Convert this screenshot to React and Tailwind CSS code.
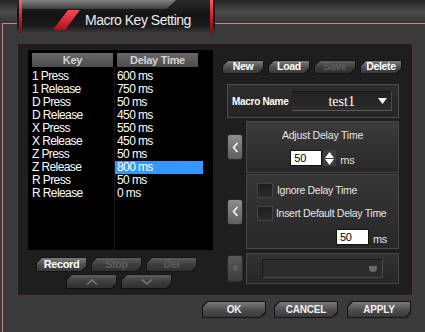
import React from 'react';

const cut = '[clip-path:polygon(5px_0,100%_0,100%_calc(100%-5px),calc(100%-5px)_100%,0_100%,0_5px)]';

const rows = [
  ['1 Press', '600 ms'],
  ['1 Release', '750 ms'],
  ['D Press', '50 ms'],
  ['D Release', '450 ms'],
  ['X Press', '550 ms'],
  ['X Release', '450 ms'],
  ['Z Press', '50 ms'],
  ['Z Release', '800 ms'],
  ['R Press', '50 ms'],
  ['R Release', '0 ms'],
];

function Chamfer({ className, dark, children }) {
  return (
    <div className={`${cut} bg-[#141414] p-px ${className}`}>
      <div
        className={`${cut} flex h-full w-full items-center justify-center ${
          dark
            ? 'bg-[linear-gradient(#5c5c5c,#3e3e3e_50%,#303030)]'
            : 'bg-[linear-gradient(#7c7c7c,#505050_50%,#383838)]'
        }`}
      >
        {children}
      </div>
    </div>
  );
}

function SideButton({ dim }) {
  return (
    <div
      className={`flex h-[26px] w-[16px] items-center justify-center rounded-[3px] border border-[#2a2a2a] ${
        dim ? 'bg-[linear-gradient(#5a5a5a,#3c3c3c)]' : 'bg-[linear-gradient(#8e8e8e,#5e5e5e)]'
      }`}
    >
      {dim ? (
        <span className="text-[9px] text-[#6a6a6a]">✲</span>
      ) : (
        <svg width="7" height="11" viewBox="0 0 7 11">
          <path d="M5.5 1 L1.5 5.5 L5.5 10" stroke="#ffffff" strokeWidth="1.6" fill="none" />
        </svg>
      )}
    </div>
  );
}

function Checkbox() {
  return <div className="h-[15px] w-[16px] border border-[#454545] bg-[linear-gradient(#1e1e1e,#2c2c2c)]" />;
}

export default function App() {
  return (
    <div className="relative flex h-[332px] w-[425px] flex-col overflow-hidden bg-[#3a3a3a] font-['Liberation_Sans',Arial,sans-serif] text-white">
      {/* top stripes */}
      <div className="h-[23px] shrink-0 bg-[linear-gradient(#242424,#333333_20%,#4c4c4c_50%,#3e3e3e_80%,#343434)]" />

      {/* title tab */}
      <div className="absolute left-[17px] top-0 flex h-[33px] w-[198px] items-center overflow-hidden bg-[linear-gradient(#2a2a2a,#131313_45%,#1c1c1c_80%,#3a3a3a)]">
        <div className="absolute left-[3px] top-0 h-[9px] w-[156px] bg-[linear-gradient(#a8a8a8,#4a4a4a)] [clip-path:polygon(0_0,100%_0,94%_100%,0_100%)] opacity-70" />
        <div className="absolute left-[2px] top-0 h-full w-[3px] bg-[linear-gradient(#ff5868,#c01828_60%,#701018)]" />
        <div className="absolute right-[2px] top-0 h-full w-[3px] bg-[linear-gradient(#ff5868,#c01828_60%,#701018)]" />
        <svg className="ml-[35px] shrink-0" width="30" height="33" viewBox="0 0 30 33">
          <defs>
            <linearGradient id="slash" x1="0" y1="0" x2="0" y2="1">
              <stop offset="0" stopColor="#ff4a55" />
              <stop offset="1" stopColor="#b0101c" />
            </linearGradient>
          </defs>
          <polygon points="1,30 13,30 28,10 16,10" fill="url(#slash)" />
        </svg>
        <span className="ml-[3px] mt-[8px] text-[14px] tracking-[-0.5px] text-[#ececec]">Macro Key Setting</span>
      </div>

      {/* frame */}
      <div className="ml-[2px] flex flex-1 flex-col border-l border-t border-[#c98a8e] pl-[14px] pt-[19px]">
        {/* main panel */}
        <div className="flex h-[253px] w-[396px] border border-[#553539] bg-[#1e1e1e]">
          {/* left list side */}
          <div className="flex w-[195px] flex-col pl-[10px] pt-[6px]">
            <div className="relative flex h-[200px] w-[185px] flex-col bg-black pl-[4px] pt-[3px] text-[12px] tracking-[-0.6px]">
              <div className="absolute bottom-0 left-[86px] top-[17px] w-px bg-[#1c1c1c]" />
              <div className="flex gap-[4px] text-[11px] tracking-[-0.3px]">
                <div className="flex h-[14px] w-[81px] items-center justify-center bg-[linear-gradient(#686868,#4c4c4c)] font-bold text-[#d4d4d4]">Key</div>
                <div className="flex h-[14px] w-[81px] items-center justify-center bg-[linear-gradient(#686868,#4c4c4c)] font-bold text-[#d4d4d4]">Delay Time</div>
              </div>
              <div className="mt-[3px] flex flex-col">
                {rows.map(([k, d], i) => (
                  <div key={i} className="flex h-[13px] items-center leading-[13px]">
                    <span className="w-[83px]">{k}</span>
                    <span className={`h-[13px] w-[88px] pl-[2px] ${i === 7 ? 'bg-[#3399ff]' : ''}`}>{d}</span>
                  </div>
                ))}
              </div>
            </div>
            <div className="mt-[7px] flex gap-[4px] pl-[8px] text-[11px] font-bold tracking-[-0.4px]">
              <Chamfer className="h-[15px] w-[51px]">Record</Chamfer>
              <Chamfer className="h-[15px] w-[51px]" dark>
                <span className="text-[#5c5c5c]">Stop</span>
              </Chamfer>
              <Chamfer className="h-[15px] w-[51px]" dark>
                <span className="text-[#5c5c5c]">Del</span>
              </Chamfer>
            </div>
            <div className="mt-[2px] flex gap-[4px] pl-[38px]">
              <Chamfer className="h-[15px] w-[51px]" dark>
                <svg width="12" height="6" viewBox="0 0 12 6">
                  <path d="M1 5.5 L6 1 L11 5.5" stroke="#7a7a7a" strokeWidth="1.5" fill="none" />
                </svg>
              </Chamfer>
              <Chamfer className="h-[15px] w-[51px]" dark>
                <svg width="12" height="6" viewBox="0 0 12 6">
                  <path d="M1 0.5 L6 5 L11 0.5" stroke="#7a7a7a" strokeWidth="1.5" fill="none" />
                </svg>
              </Chamfer>
            </div>
          </div>

          {/* right controls */}
          <div className="flex flex-1 flex-col pl-[9px] pt-[16px]">
            <div className="flex gap-[4px] text-[10.5px] font-bold tracking-[-0.3px]">
              <Chamfer className="h-[14px] w-[42px]">New</Chamfer>
              <Chamfer className="h-[14px] w-[42px]">Load</Chamfer>
              <Chamfer className="h-[14px] w-[42px]" dark>
                <span className="text-[#5e5e5e]">Save</span>
              </Chamfer>
              <Chamfer className="h-[14px] w-[42px]">Delete</Chamfer>
            </div>

            <div className="ml-[5px] mt-[10px] flex h-[34px] w-[172px] items-center border border-[#4e4e4e] bg-[linear-gradient(#2e2e2e,#252525)] pl-[4px]">
              <span className="text-[10px] font-bold tracking-[-0.3px]">Macro Name</span>
              <div className="ml-[4px] flex h-[20px] w-[100px] items-center border-b border-r border-t border-b-[#5a5a5a] border-r-[#4a4a4a] border-t-[#151515] bg-[linear-gradient(#222222,#2c2c2c)] pl-[36px] pr-[4px]">
                <span className="font-['Liberation_Serif',serif] text-[14px]">test1</span>
                <svg className="ml-auto" width="9" height="6" viewBox="0 0 9 6">
                  <polygon points="0,0 9,0 4.5,6" fill="#ffffff" />
                </svg>
              </div>
            </div>

            <div className="ml-[5px] mt-[3px] flex items-center gap-[3px]">
              <SideButton />
              <div className="flex h-[52px] w-[153px] flex-col items-center border border-[#474747] bg-[linear-gradient(#3c3c3c,#282828)] pt-[6px] text-[10.5px] tracking-[-0.2px]">
                <span className="text-[#e6e6e6]">Adjust Delay Time</span>
                <div className="mt-[4px] flex items-center">
                  <div className="flex h-[16px] w-[32px] items-center border border-[#111] bg-white pl-[3px] text-[11px] text-black">50</div>
                  <div className="ml-px flex h-[16px] w-[13px] flex-col items-center justify-center gap-[1px] bg-[#3e3e3e]">
                    <svg width="9" height="6" viewBox="0 0 9 6">
                      <polygon points="0,6 9,6 4.5,0" fill="#ffffff" />
                    </svg>
                    <svg width="9" height="6" viewBox="0 0 9 6">
                      <polygon points="0,0 9,0 4.5,6" fill="#ffffff" />
                    </svg>
                  </div>
                  <span className="ml-[4px] mt-[4px] text-[11px] text-[#e0e0e0]">ms</span>
                </div>
              </div>
            </div>

            <div className="ml-[5px] mt-px flex items-center gap-[3px]">
              <SideButton />
              <div className="flex h-[75px] w-[153px] flex-col border border-[#474747] bg-[linear-gradient(#363636,#282828)] pl-[10px] pr-[11px] pt-[8px] text-[10.5px] tracking-[-0.3px] text-[#e6e6e6]">
                <div className="flex items-center gap-[4px]">
                  <Checkbox />
                  <span>Ignore Delay Time</span>
                </div>
                <div className="mt-[7px] flex items-center gap-[3px]">
                  <Checkbox />
                  <span>Insert Default Delay Time</span>
                </div>
                <div className="mt-[5px] flex items-center justify-end">
                  <div className="flex h-[16px] w-[33px] items-center border border-[#111] bg-white pl-[3px] text-[11px] text-black">50</div>
                  <span className="ml-[4px] mt-[4px] text-[11px]">ms</span>
                </div>
              </div>
            </div>

            <div className="ml-[5px] mt-[4px] flex items-center gap-[3px]">
              <div className="flex h-[27px] w-[16px] items-center justify-center rounded-[3px] border border-[#2a2a2a] bg-[linear-gradient(#5a5a5a,#3c3c3c)] text-[8px] text-[#6e6e6e]">✲</div>
              <div className="flex h-[31px] w-[153px] items-center border border-[#474747] bg-[linear-gradient(#333333,#262626)] pl-[15px]">
                <div className="flex h-[19px] w-[121px] items-center justify-end border border-b-[#4a4a4a] border-l-[#181818] border-r-[#4a4a4a] border-t-[#181818] bg-[#2c2c2c] pr-[5px]">
                  <div className="h-[6px] w-[8px] rounded-b-[4px] rounded-t-[1px] bg-[#6a6a6a]" />
                </div>
              </div>
            </div>
          </div>
        </div>

        {/* bottom buttons */}
        <div className="mt-[5px] flex pl-[185px] text-[10px] font-bold tracking-[-0.2px] text-[#f0f0f0]">
          <Chamfer className="h-[17px] w-[64px]">OK</Chamfer>
          <Chamfer className="ml-[8px] h-[17px] w-[64px]">CANCEL</Chamfer>
          <Chamfer className="ml-[9px] h-[17px] w-[64px]">APPLY</Chamfer>
        </div>
      </div>
    </div>
  );
}
